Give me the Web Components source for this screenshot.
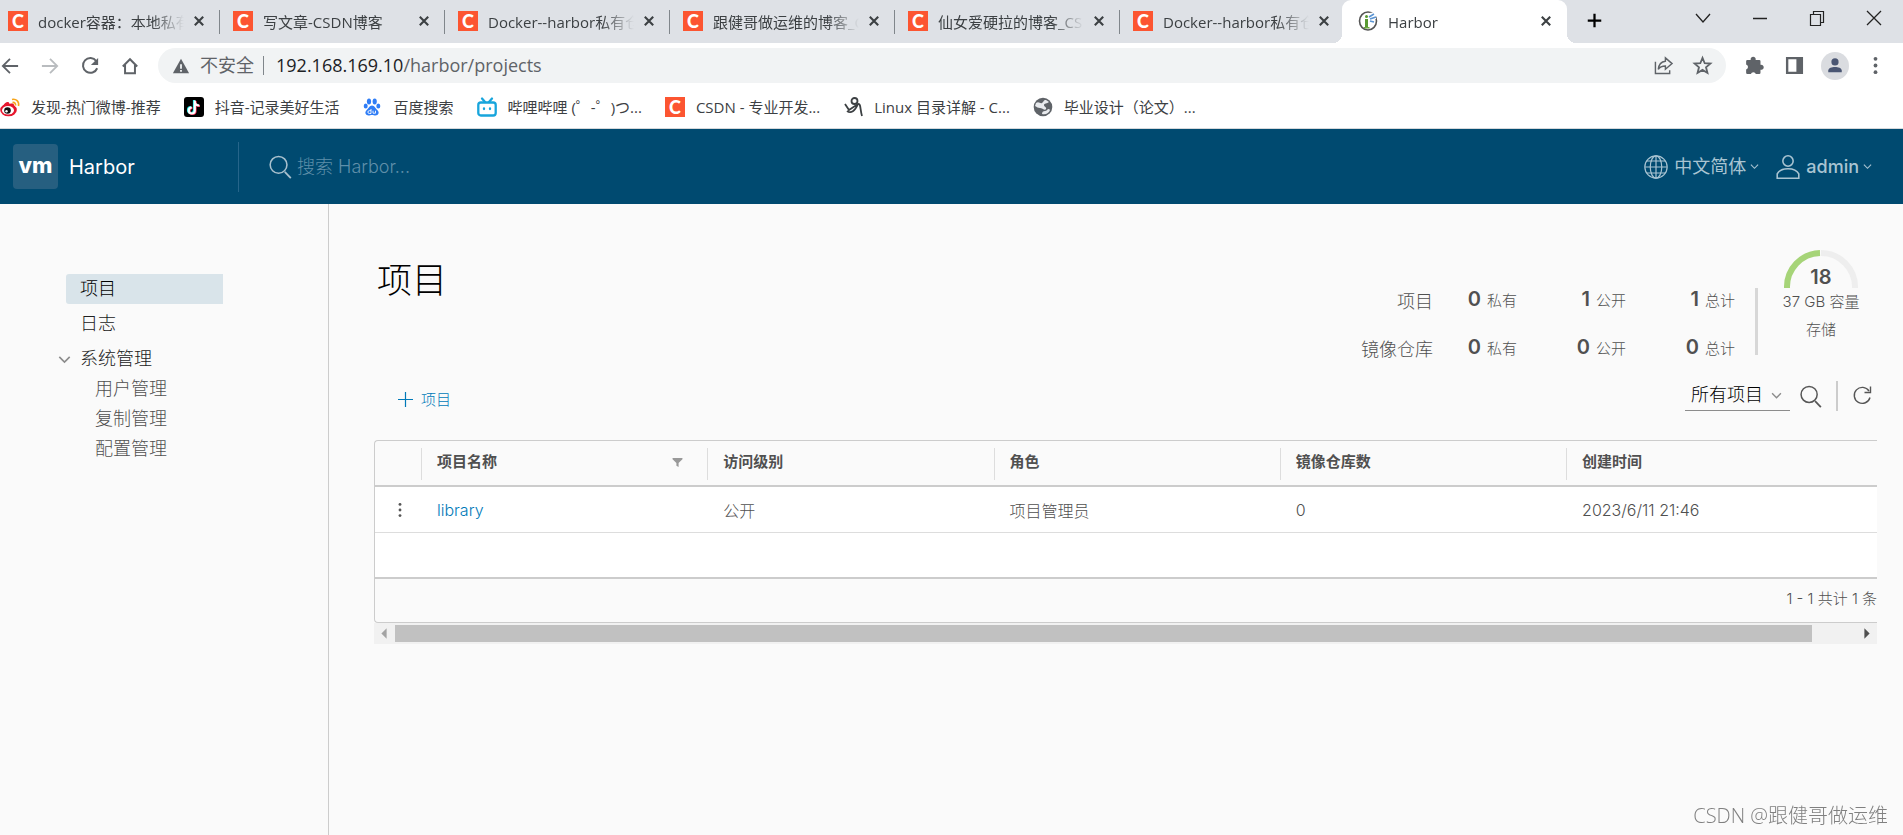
<!DOCTYPE html>
<html lang="zh-CN">
<head>
<meta charset="utf-8">
<title>Harbor</title>
<style>
  body {
    margin: 0;
    min-height: 100vh;
    display: flex;
    flex-direction: column;
    background: #fafafa;
    --ui-font: "Open Sans", "Noto Sans CJK SC", sans-serif;
    --app-font: Inter, "Noto Sans CJK SC", sans-serif;
    font-family: var(--ui-font);
  }
</style>
</head>
<body>
<browser-chrome></browser-chrome>
<harbor-header></harbor-header>
<harbor-shell>
  <side-nav slot="nav"></side-nav>
  <projects-page></projects-page>
</harbor-shell>
<page-watermark>CSDN @跟健哥做运维</page-watermark>

<script>
const define = (name, html, setup) => {
  const template = document.createElement('template');
  template.innerHTML = html;
  customElements.define(name, class extends HTMLElement {
    constructor() {
      super();
      this.attachShadow({ mode: 'open' }).append(template.content.cloneNode(true));
    }
    connectedCallback() {
      if (setup) setup(this, this.shadowRoot);
    }
  });
};

const line = 'fill="none" stroke="currentColor"';
const ICONS = {
  close: `<path d="M4 4l12 12M16 4L4 16" ${line} stroke-width="3"/>`,
  plus: `<path d="M10 1v18M1 10h18" ${line} stroke-width="3"/>`,
  back: `<path d="M19 10H3M10 2l-8 8 8 8" ${line} stroke-width="2"/>`,
  forward: `<path d="M1 10h16M10 2l8 8-8 8" ${line} stroke-width="2"/>`,
  reload: `<path d="M17 4.500A8.200 8.200 0 1 0 18 12.500" ${line} stroke-width="2.200"/><path d="M19 1v8h-8z" fill="currentColor"/>`,
  home: `<path d="M2 10.500L10 2.500l8 8M4.500 9v9h11V9" ${line} stroke-width="2.200"/>`,
  warn: `<path d="M10 2L19 18H1z" fill="currentColor"/><path d="M10 8v5M10 14.500v2" stroke="#f1f3f4" stroke-width="2"/>`,
  share: `<path d="M1.500 6v12.500h15V15" ${line} stroke-width="1.500"/><path d="M12 2l7 6-7 6v-3.500c-4 0-6 1-7.500 3.500.500-5 3-8 7.500-8.500z" ${line} stroke-width="1.500"/>`,
  star: `<path d="M10 2l2.300 5.600 6 .400-4.600 3.900 1.500 5.900-5.200-3.200-5.200 3.200 1.500-5.900L1.700 8l6-.400z" ${line} stroke-width="1.900"/>`,
  puzzle: `<path d="M6 4.300a2.700 2.700 0 1 1 5.200 0H15a1.300 1.300 0 0 1 1.300 1.300v3.600a2.700 2.700 0 1 1 0 5.200v3.300A1.300 1.300 0 0 1 15 19h-3.600a2.700 2.700 0 0 0-5.200 0H2.500a1.300 1.300 0 0 1-1.300-1.300v-3.500a2.700 2.700 0 0 0 0-5.200V5.600a1.300 1.300 0 0 1 1.300-1.300z" fill="currentColor"/>`,
  panel: `<path d="M1 1h18v18H1zM3.500 3.500v13H12v-13z" fill="currentColor" fill-rule="evenodd"/>`,
  person: `<circle cx="10" cy="5.500" r="4" fill="currentColor"/><path d="M2.500 17v-2c0-3 4-4 7.500-4s7.500 1 7.500 4v2z" fill="currentColor"/>`,
  dots: `<g fill="currentColor"><circle cx="10" cy="3" r="2"/><circle cx="10" cy="10" r="2"/><circle cx="10" cy="17" r="2"/></g>`,
  kebab: `<g fill="currentColor"><circle cx="10" cy="3" r="1.800"/><circle cx="10" cy="10" r="1.800"/><circle cx="10" cy="17" r="1.800"/></g>`,
  winDown: `<path d="M3 6l7 8 7-8" ${line} stroke-width="1.300"/>`,
  winMin: `<path d="M3 10.500h14" ${line} stroke-width="1.500"/>`,
  winMax: `<path d="M3.500 6.500h10v11h-10zM6.500 6V3.500h10v11H14" ${line} stroke-width="1.200"/>`,
  winClose: `<path d="M3 3l14 14M17 3L3 17" ${line} stroke-width="1.300"/>`,
  chevron: `<path d="M2 6l8 8 8-8" ${line} stroke-width="2.500"/>`,
  search: `<circle cx="8.800" cy="8.200" r="7" ${line} stroke-width="1.300"/><path d="M14 14l5 5.300" ${line} stroke-width="1.500"/>`,
  refresh: `<path d="M17 5A8 8 0 1 0 18 11.500" ${line} stroke-width="1.400"/><path d="M18.500.500v6h-6" ${line} stroke-width="1.400"/>`,
  globe: `<g ${line} stroke-width="1"><circle cx="10" cy="10" r="9.300"/><ellipse cx="10" cy="10" rx="4.800" ry="9.300"/><path d="M10 .7v18.600M.7 10h18.600M2.500 5h15M2.500 15h15"/></g>`,
  user: `<g ${line} stroke-width="1.300"><circle cx="10" cy="5" r="4.300"/><path d="M1 19.300v-3.500c1.500-3 5-4.300 9-4.300s7.500 1.300 9 4.300v3.500z"/></g>`,
  thinPlus: `<path d="M10 0v20M0 10h20" ${line} stroke-width="1.600"/>`,
  filter: `<path d="M1 2h18v2l-7 7v7l-4-2v-5L1 4z" fill="currentColor"/>`,
  left: `<path d="M12 5v10l-5-5z" fill="currentColor"/>`,
  right: `<path d="M8 5v10l5-5z" fill="currentColor"/>`,
  harbor: `<ellipse cx="10" cy="10" rx="8.500" ry="9" fill="#fff" stroke="#555" stroke-width="1.600"/><path d="M11 2l7-1v7l-7 1z" fill="#fff"/><path d="M7 8h3v8H7z" fill="#5a9a32"/><path d="M6 16h5.500v1.500H6z" fill="#6aa83c"/><circle cx="8.500" cy="5.500" r="1.500" fill="#5a9a32"/><path d="M11 6l5-3M12 8l6-2M12 10l4 1" stroke="#5b94d2" stroke-width="1.600"/>`,
  weibo: `<ellipse cx="8.500" cy="13" rx="8.300" ry="6.300" fill="#e6162d"/><path d="M3 9C5 5 9 3.500 9.500 7c5-1.500 5 1 4 3" fill="#e6162d"/><ellipse cx="8" cy="13.200" rx="6" ry="4.300" fill="#fff"/><circle cx="7.500" cy="13.500" r="3.300" fill="#111"/><circle cx="6.500" cy="14.200" r="1.200" fill="#fff"/><path d="M12 2.500c4-1 7.500 2 6.500 6.500M12.500 5.500c2-.500 3.500 1 3 3" fill="none" stroke="#f7a51c" stroke-width="1.600"/>`,
  douyin: `<rect width="20" height="20" rx="3" fill="#000"/><g fill="none" stroke-width="2.200"><path d="M10 3v10a3 3 0 1 1-3-3M10 4c0 2.500 2 4 4.500 4" stroke="#25f4ee"/><path d="M11.500 4v10a3 3 0 1 1-3-3M11.500 5c0 2.500 2 4 4.500 4" stroke="#fe2c55"/><path d="M10.800 3.500v10a3 3 0 1 1-3-3M10.800 4.500c0 2.500 2 4 4.500 4" stroke="#fff"/></g>`,
  baidu: `<g fill="#2f7df6"><ellipse cx="7" cy="4.500" rx="2.100" ry="2.900"/><ellipse cx="12.700" cy="4.500" rx="2.100" ry="2.900"/><ellipse cx="3.700" cy="9" rx="2" ry="2.500"/><ellipse cx="16.300" cy="9" rx="2" ry="2.500"/><path d="M10 8.500c2.500 0 3.500 3 5.500 4.800 2.500 2.700.500 5.200-2 5.200-1.500 0-2-.500-3.500-.500s-2 .500-3.500.500c-2.500 0-4.500-2.500-2-5.200C6.500 11.500 7.500 8.500 10 8.500z"/></g><path d="M9 12v4.500H7.300a1.100 1.100 0 0 1 0-2.800H9M11 13.700v2.500h2.500v-2.500" fill="none" stroke="#fff" stroke-width=".9"/>`,
  bili: `<g fill="none" stroke="#18a5dc" stroke-width="2.300" stroke-linecap="round"><path d="M5 1.500l3 3.500M15 1.500l-3 3.500"/><rect x="1.300" y="5.500" width="17.400" height="13" rx="2.500"/><path d="M7 11.500v.500M13 11.500v.500"/></g>`,
  sketch: `<g fill="none" stroke="#3c4043" stroke-width="1.800"><circle cx="11.500" cy="4" r="3"/><path d="M2 7l4 6 9-6c3-1 2 6 4 12M4 14c4 3 8 0 11-7"/></g>`,
  earth: `<circle cx="10" cy="10" r="9.300" fill="#5f6368"/><path d="M3 6c3-2 4 1 6 0s1-3 4-3l3 2c-2 2-5 1-5 3s3 2 2 4-4-1-6-1-3-1-5-2zM9 17c0-2 1-3 3-3s2-2 4-2l1 1c-1 3-4 5-8 4z" fill="#e8eaed"/>`
};

/* <ui-icon name size>: one drawing from the set, in the current colour */
define('ui-icon', `
<style>
  :host { display: inline-flex; flex: none; width: var(--icon-size, 20px); height: var(--icon-size, 20px); }
  svg { width: 100%; height: 100%; overflow: visible; }
</style>
<svg viewBox="0 0 20 20" aria-hidden="true"></svg>`, (el, root) => {
  root.querySelector('svg').innerHTML = ICONS[el.getAttribute('name')];
});

define('csdn-icon', `
<style>
  :host { display: flex; flex: none; width: 20px; height: 20px; background: #fc5531; color: #fff;
    align-items: center; justify-content: center; font: 900 18px/20px Lato, sans-serif; }
</style><span aria-hidden="true">C</span>`);

define('browser-tab', `
<style>
  :host { display: flex; flex: 0 1 225px; min-width: 0; box-sizing: border-box; height: 43px; align-items: center;
    padding: 0 10px 2px 16px; color: #3c4043; position: relative; }
  :host([first]) { flex-basis: 217px; padding-left: 8px; }
  :host([divided])::after { content: ""; position: absolute; right: -3px; top: 10px; height: 24px; width: 1px; background: #80868b; }
  :host([active]) { background: #fff; border-radius: 9px 9px 0 0; padding-right: 13px; }
  .corner { display: none; position: absolute; bottom: 0; width: 9px; height: 9px; }
  :host([active]) .corner { display: block; }
  .l { left: -9px; background: radial-gradient(circle at 0 0, transparent 9px, #fff 9px); }
  .r { right: -9px; background: radial-gradient(circle at 100% 0, transparent 9px, #fff 9px); }
  .title { flex: 1; min-width: 0; margin: 2px 7px 0 10px; font-size: 15px; line-height: 22px; white-space: nowrap; overflow: hidden;
    mask-image: linear-gradient(to right, #000 calc(100% - 32px), transparent); }
  button { border: 0; padding: 0; background: none; color: #3c4043; display: flex; width: 16px; height: 16px;
    align-items: center; justify-content: center; --icon-size: 14px; }
</style>
<i class="corner l"></i><slot name="icon"></slot><span class="title"><slot></slot></span>
<button aria-label="关闭标签页"><ui-icon name="close"></ui-icon></button><i class="corner r"></i>`);

define('bookmark-item', `
<style>
  :host { display: flex; }
  a { display: flex; align-items: center; gap: 11px; color: #3c4043; text-decoration: none; font-size: 15px; line-height: 22px; white-space: nowrap; }
</style>
<a href="#"><slot name="icon"></slot><slot></slot></a>`);

define('browser-chrome', `
<style>
  :host { display: block; background: #fff; border-bottom: 1px solid #d5d8db; }
  .tabs { display: flex; background: #dee1e6; height: 43px; align-items: center; }
  button { border: 0; padding: 0; background: none; color: inherit; display: flex; align-items: center; justify-content: center; }
  .new { margin-left: 20px; padding-bottom: 2px; --icon-size: 15px; }
  .win { margin-left: auto; display: flex; gap: 37px; padding: 0 19px 7px 0; color: #222; }
  .bar { display: flex; align-items: center; height: 45px; color: #5f6368; padding-right: 18px; --icon-size: 18px; }
  .nav { display: flex; gap: 22px; padding: 0 19px 0 1px; }
  .nav [disabled] { color: #b9bcbf; }
  .omni { flex: 1; display: flex; align-items: center; height: 35px; border-radius: 18px; background: #f1f3f4; padding: 0 14px; font-size: 18px; line-height: 24px; margin-right: 19px; }
  .omni .safe { margin: 0 9px 0 10px; }
  .omni .sep { width: 1px; height: 19px; background: #80868b; margin-right: 12px; }
  .omni p { margin: 0; flex: 1; }
  .omni p, .omni .safe { padding-bottom: 2px; }
  .omni p b { font-weight: 400; color: #202124; }
  .omni .acts { display: flex; gap: 20px; }
  .acts { --icon-size: 19px; }
  .tools { display: flex; align-items: center; gap: 21px; --icon-size: 19px; }
  .avatar { width: 28px; height: 28px; border-radius: 50%; background: #dadce0; color: #4a5673; margin: 0 -4px; --icon-size: 18px; }
  .marks { display: flex; align-items: center; gap: 23px; height: 38px; padding-bottom: 2px; --icon-size: 20px; }
</style>
<div class="tabs">
  <browser-tab first divided><csdn-icon slot="icon"></csdn-icon>docker容器：本地私有仓</browser-tab>
  <browser-tab divided><csdn-icon slot="icon"></csdn-icon>写文章-CSDN博客</browser-tab>
  <browser-tab divided><csdn-icon slot="icon"></csdn-icon>Docker--harbor私有仓</browser-tab>
  <browser-tab divided><csdn-icon slot="icon"></csdn-icon>跟健哥做运维的博客_C</browser-tab>
  <browser-tab divided><csdn-icon slot="icon"></csdn-icon>仙女爱硬拉的博客_CS</browser-tab>
  <browser-tab><csdn-icon slot="icon"></csdn-icon>Docker--harbor私有仓</browser-tab>
  <browser-tab active><ui-icon slot="icon" name="harbor"></ui-icon>Harbor</browser-tab>
  <button class="new" aria-label="新标签页"><ui-icon name="plus"></ui-icon></button>
  <div class="win">
    <button aria-label="搜索标签页"><ui-icon name="winDown"></ui-icon></button>
    <button aria-label="最小化"><ui-icon name="winMin"></ui-icon></button>
    <button aria-label="还原"><ui-icon name="winMax"></ui-icon></button>
    <button aria-label="关闭"><ui-icon name="winClose"></ui-icon></button>
  </div>
</div>
<div class="bar">
  <div class="nav">
    <button aria-label="后退"><ui-icon name="back"></ui-icon></button>
    <button aria-label="前进" disabled><ui-icon name="forward"></ui-icon></button>
    <button aria-label="重新加载"><ui-icon name="reload"></ui-icon></button>
    <button aria-label="主页"><ui-icon name="home"></ui-icon></button>
  </div>
  <div class="omni">
    <ui-icon name="warn"></ui-icon><span class="safe">不安全</span><i class="sep"></i>
    <p><b>192.168.169.10</b>/harbor/projects</p>
    <div class="acts">
      <button aria-label="分享"><ui-icon name="share"></ui-icon></button>
      <button aria-label="收藏"><ui-icon name="star"></ui-icon></button>
    </div>
  </div>
  <div class="tools">
    <button aria-label="扩展程序"><ui-icon name="puzzle"></ui-icon></button>
    <button aria-label="侧边栏"><ui-icon name="panel"></ui-icon></button>
    <button class="avatar" aria-label="个人资料"><ui-icon name="person"></ui-icon></button>
    <button aria-label="菜单"><ui-icon name="dots"></ui-icon></button>
  </div>
</div>
<div class="marks">
  <bookmark-item><ui-icon slot="icon" name="weibo"></ui-icon>发现-热门微博-推荐</bookmark-item>
  <bookmark-item><ui-icon slot="icon" name="douyin"></ui-icon>抖音-记录美好生活</bookmark-item>
  <bookmark-item><ui-icon slot="icon" name="baidu"></ui-icon>百度搜索</bookmark-item>
  <bookmark-item><ui-icon slot="icon" name="bili"></ui-icon>哔哩哔哩 (゜-゜)つ...</bookmark-item>
  <bookmark-item><csdn-icon slot="icon"></csdn-icon>CSDN - 专业开发...</bookmark-item>
  <bookmark-item><ui-icon slot="icon" name="sketch"></ui-icon>Linux 目录详解 - C...</bookmark-item>
  <bookmark-item><ui-icon slot="icon" name="earth"></ui-icon>毕业设计（论文）...</bookmark-item>
</div>`);

define('harbor-header', `
<style>
  :host { display: flex; align-items: center; height: 75px; background: #004a70; color: #fff; font-family: var(--app-font); padding: 0 31px 0 13px; }
  .brand { display: flex; align-items: center; gap: 11px; width: 225px; color: #fff; text-decoration: none; font-size: 20px; }
  .vm { width: 45px; height: 45px; border-radius: 4px; background: #265f80; display: flex; align-items: center; justify-content: center; font-weight: 800; font-size: 22px; line-height: 40px; }
  .vm span { margin-bottom: 3px; }
  .search { flex: 1; display: flex; align-items: center; gap: 5px; height: 50px; border-left: 1px solid #26658a; padding-left: 29px; color: #a9c1ce; --icon-size: 24px; }
  input { flex: 1; border: 0; outline: 0; padding: 0; background: none; color: #fff; font: 300 18px/24px var(--app-font); }
  input::placeholder { color: #5f8fa9; opacity: 1; }
  button { border: 0; padding: 0; background: none; display: flex; align-items: center; gap: 6px; color: #a9c4d2; font: 400 18px/24px var(--app-font); --icon-size: 24px; }
  button + button { margin-left: 17px; font-weight: 500; }
  .c { --icon-size: 9px; margin-left: -2px; }
</style>
<a class="brand" href="#"><span class="vm"><span>vm</span></span>Harbor</a>
<label class="search"><ui-icon name="search"></ui-icon><input type="search" placeholder="搜索 Harbor..." aria-label="搜索 Harbor"></label>
<button><ui-icon name="globe"></ui-icon>中文简体<ui-icon class="c" name="chevron"></ui-icon></button>
<button><ui-icon name="user"></ui-icon>admin<ui-icon class="c" name="chevron"></ui-icon></button>`);

define('harbor-shell', `
<style>
  :host { display: flex; flex: 1; font-family: var(--app-font); font-weight: 300; color: #505050; }
  aside { flex: 0 0 328px; border-right: 1px solid #ccc; }
  main { flex: 1; min-width: 0; padding: 0 26px 20px 45px; }
</style>
<aside><slot name="nav"></slot></aside><main><slot></slot></main>`);

define('side-nav', `
<style>
  :host { display: block; padding: 70px 105px 0 66px; font-size: 18px; }
  ul { list-style: none; margin: 0; padding: 0; }
  a { display: block; line-height: 30px; padding-left: 14px; color: #212121; text-decoration: none; white-space: nowrap; }
  .top > li { margin-bottom: 5px; }
  .top > li:last-child { position: relative; }
  .on { background: #d9e4ea; color: #000; border-radius: 3px 0 0 3px; }
  ul ul a { padding-left: 29px; color: #505050; }
  button { position: absolute; left: -8px; top: 9px; border: 0; padding: 0; background: none; color: #8c8c8c; display: flex; --icon-size: 13px; }
</style>
<nav><ul class="top">
  <li><a class="on" href="#">项目</a></li>
  <li><a href="#">日志</a></li>
  <li><button aria-label="折叠"><ui-icon name="chevron"></ui-icon></button><a href="#">系统管理</a>
    <ul><li><a href="#">用户管理</a></li><li><a href="#">复制管理</a></li><li><a href="#">配置管理</a></li></ul>
  </li>
</ul></nav>`);

define('stat-value', `
<style>
  :host { display: flex; justify-content: flex-end; align-items: baseline; gap: 6px; font-size: 15px; line-height: 24px; white-space: nowrap; }
  b { font-size: 20px; font-weight: 600; }
</style>
<b></b><slot></slot>`, (el, root) => { root.querySelector('b').textContent = el.getAttribute('value'); });

define('storage-gauge', `
<style>
  :host { display: flex; flex-direction: column; align-items: center; width: 80px; font-size: 15px; line-height: 28px; white-space: nowrap; }
  .dial { display: grid; justify-items: center; align-items: end; width: 76px; height: 39px; }
  .dial > * { grid-area: 1 / 1; }
  svg { width: 76px; height: 39px; }
  b { font-size: 20px; font-weight: 600; line-height: 22px; }
</style>
<div class="dial">
  <svg viewBox="0 0 76 39" fill="none" stroke-width="6"><path d="M38 4a34 34 0 0 1 34 35" stroke="#eee"/><path d="M4 39A34 34 0 0 1 37 4" stroke="#a6d478"/></svg>
  <b>18</b>
</div>
<span>37 GB 容量</span><span>存储</span>`);

define('project-stats', `
<style>
  :host { display: flex; padding-right: 16px; }
  .grid { display: grid; grid-template-columns: auto 84px 109px 109px; grid-auto-rows: 24px; row-gap: 24px; align-items: center; margin-top: 84px; }
  .name { font-size: 18px; line-height: 24px; text-align: right; padding-top: 4px; }
  .rule { width: 3px; height: 67px; margin: 84px 23px 0 20px; background: #d7d7d7; }
  storage-gauge { margin-top: 45px; }
</style>
<div class="grid">
  <span class="name">项目</span><stat-value value="0">私有</stat-value><stat-value value="1">公开</stat-value><stat-value value="1">总计</stat-value>
  <span class="name">镜像仓库</span><stat-value value="0">私有</stat-value><stat-value value="0">公开</stat-value><stat-value value="0">总计</stat-value>
</div>
<i class="rule"></i><storage-gauge></storage-gauge>`);

define('project-actions', `
<style>
  :host { display: flex; align-items: center; height: 48px; padding: 0 5px 2px 24px; }
  button { border: 0; padding: 0; background: none; color: #565656; display: flex; align-items: center; }
  .add { gap: 8px; color: #0079b8; font: 300 15px/24px var(--app-font); --icon-size: 15px; margin-right: auto; padding-top: 7px; }
  .pick { display: flex; align-items: center; width: 105px; height: 29px; border-bottom: 1px solid #8c8c8c; color: #8c8c8c; position: relative; }
  select { appearance: none; width: 100%; border: 0; outline: 0; background: none; color: #000; padding: 0 0 2px 6px; font: 300 18px/26px var(--app-font); }
  .pick ui-icon { position: absolute; right: 8px; --icon-size: 11px; pointer-events: none; }
  .find { --icon-size: 23px; margin-left: 9px; }
  .rule { width: 2px; height: 30px; background: #ccc; margin: 0 14px; }
</style>
<button class="add"><ui-icon name="thinPlus"></ui-icon>项目</button>
<label class="pick"><select aria-label="项目范围"><option>所有项目</option><option>私有项目</option><option>公开项目</option></select><ui-icon name="chevron"></ui-icon></label>
<button class="find" aria-label="搜索"><ui-icon name="search"></ui-icon></button><i class="rule"></i>
<button aria-label="刷新"><ui-icon name="refresh"></ui-icon></button>`);

define('project-grid', `
<style>
  :host { display: block; margin-top: 18px; }
  .frame { border: 1px solid #ccc; border-right: 0; border-radius: 4px 0 0 4px; overflow: hidden; }
  table { width: 100%; table-layout: fixed; border-collapse: separate; border-spacing: 0; font-size: 16px; }
  .k { width: 46px; } .d { width: 19.06%; }
  th { height: 46px; padding: 0 0 6px 16px; box-sizing: border-box; border-bottom: 2px solid #ccc; font-size: 15px; font-weight: 600; text-align: left; position: relative; }
  th + th::before { content: ""; position: absolute; left: 0; top: 7px; width: 1px; height: 32px; background: #ddd; }
  th div { display: flex; align-items: center; justify-content: space-between; }
  th button { margin: 4px 24px 0 0; color: #999; --icon-size: 11px; }
  td { height: 45px; padding: 0 0 0 16px; border-bottom: 1px solid #ddd; background: #fff; }
  tr:last-child td { border-bottom: 2px solid #ccc; height: 44px; }
  td:first-child { padding-left: 17px; }
  a { color: #0079b8; text-decoration: none; }
  button { border: 0; padding: 0; background: none; color: #565656; display: flex; --icon-size: 16px; }
  footer { height: 43px; line-height: 40px; font-size: 15px; text-align: right; }
  footer span { white-space: nowrap; }
  .scroll { display: flex; align-items: center; height: 21px; background: #f1f1f1; color: #505050; --icon-size: 21px; }
  .scroll ui-icon:first-child { color: #a3a3a3; }
  .track { flex: 1; }
  .thumb { width: 97%; height: 17px; background: #c1c1c1; }
</style>
<div class="frame">
  <table>
    <colgroup><col class="k"><col class="d"><col class="d"><col class="d"><col class="d"><col></colgroup>
    <thead><tr><th></th><th><div>项目名称<button aria-label="筛选"><ui-icon name="filter"></ui-icon></button></div></th><th>访问级别</th><th>角色</th><th>镜像仓库数</th><th>创建时间</th></tr></thead>
    <tbody>
      <tr><td><button aria-label="操作"><ui-icon name="kebab"></ui-icon></button></td><td><a href="#">library</a></td><td>公开</td><td>项目管理员</td><td>0</td><td>2023/6/11 21:46</td></tr>
      <tr><td colspan="6"></td></tr>
    </tbody>
  </table>
  <footer><span>1 - 1 共计 1 条</span></footer>
</div>
<div class="scroll"><ui-icon name="left"></ui-icon><div class="track"><div class="thumb"></div></div><ui-icon name="right"></ui-icon></div>`);

define('projects-page', `
<style>
  :host { display: block; }
  .head { display: flex; justify-content: space-between; height: 168px; }
  h1 { margin: 52px 0 0 3px; font-size: 35px; line-height: 48px; font-weight: 200; color: #000; }
</style>
<div class="head"><h1>项目</h1><project-stats></project-stats></div>
<project-actions></project-actions>
<project-grid></project-grid>`);

/* Credit that floats over the page's bottom right corner */
define('page-watermark', `
<style>
  :host { position: fixed; right: 15px; bottom: 5px; font-size: 20px; line-height: 28px; font-weight: 300; color: #808080; white-space: nowrap; pointer-events: none; }
</style><slot></slot>`);
</script>
</body>
</html>
